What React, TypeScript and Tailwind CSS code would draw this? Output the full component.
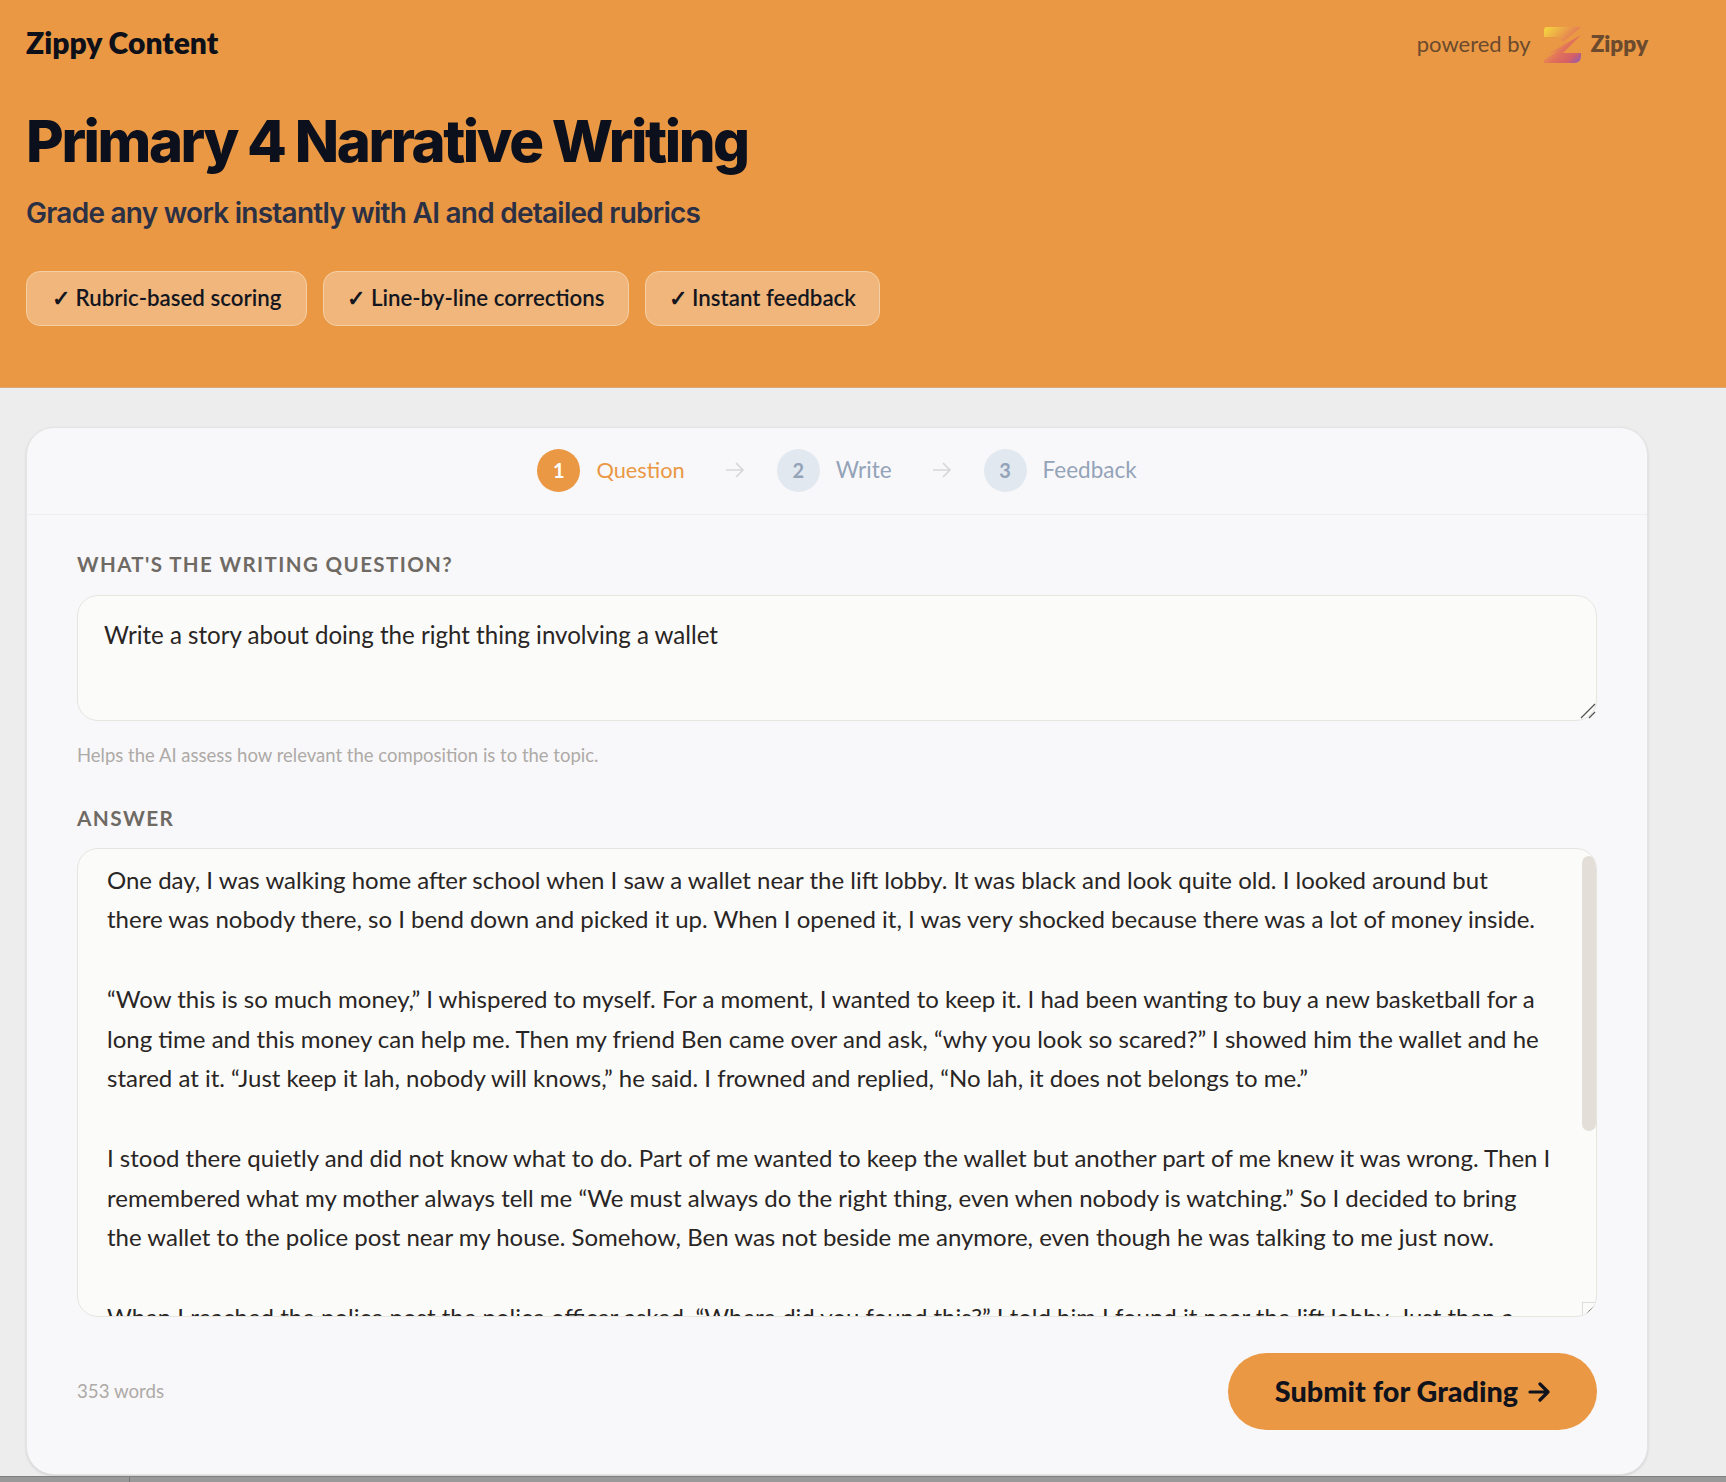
const lines = [
  "One day, I was walking home after school when I saw a wallet near the lift lobby. It was black and look quite old. I looked around but",
  "there was nobody there, so I bend down and picked it up. When I opened it, I was very shocked because there was a lot of money inside.",
  "\u00A0",
  "“Wow this is so much money,” I whispered to myself. For a moment, I wanted to keep it. I had been wanting to buy a new basketball for a",
  "long time and this money can help me. Then my friend Ben came over and ask, “why you look so scared?” I showed him the wallet and he",
  "stared at it. “Just keep it lah, nobody will knows,” he said. I frowned and replied, “No lah, it does not belongs to me.”",
  "\u00A0",
  "I stood there quietly and did not know what to do. Part of me wanted to keep the wallet but another part of me knew it was wrong. Then I",
  "remembered what my mother always tell me “We must always do the right thing, even when nobody is watching.” So I decided to bring",
  "the wallet to the police post near my house. Somehow, Ben was not beside me anymore, even though he was talking to me just now.",
  "\u00A0",
  "When I reached the police post the police officer asked, “Where did you found this?” I told him I found it near the lift lobby. Just then a",
];

function Logo() {
  return (
    <svg width="37" height="37" viewBox="0 0 37 37" className="shrink-0">
      <defs>
        <linearGradient id="zg" gradientUnits="userSpaceOnUse" x1="2" y1="2" x2="36" y2="36">
          <stop offset="0" stopColor="#f3d040" />
          <stop offset="0.3" stopColor="#eba04a" />
          <stop offset="0.55" stopColor="#e2735a" />
          <stop offset="0.8" stopColor="#d45f68" />
          <stop offset="1" stopColor="#8a5cb8" />
        </linearGradient>
      </defs>
      <path d="M3 0H37L19 15 14 10H0V3Q0 0 3 0Z" fill="url(#zg)" />
      <path d="M37 8 19 26H37V29Q37 36 30 36H0V33L13 24 0 29Z" fill="url(#zg)" />
    </svg>
  );
}

function Step({ n, label, active }: { n: number; label: string; active?: boolean }) {
  return (
    <div className="flex items-center gap-[16px]">
      <div className={active ? "w-[43px] h-[43px] rounded-full bg-[#ea9844] text-white flex items-center justify-center text-[20px] font-bold" : "w-[43px] h-[43px] rounded-full bg-[#e2e8f0] text-[#94a3b8] flex items-center justify-center text-[20px] font-bold"}>
        {n}
      </div>
      <span className={active ? "text-[21.8px] text-[#ea9844]" : "text-[22.5px] text-[#94a3b8]"}>{label}</span>
    </div>
  );
}

function Arrow() {
  return (
    <svg width="20" height="18" viewBox="0 0 20 18" fill="none" stroke="#d6d6d6" strokeWidth="1.6" className="ml-[40px] mr-[32px]">
      <path d="M1 9h17M11 2l7 7-7 7" />
    </svg>
  );
}

function Pill({ children, wide }: { children: string; wide?: boolean }) {
  return (
    <div className={wide ? "h-[55px] flex items-center px-[25px] pb-[2px] rounded-[14px] bg-[#f0b67b] border border-[#f5cfa4] text-[22.3px] font-semibold text-[#14161f] whitespace-nowrap" : "h-[55px] flex items-center px-[23px] pb-[2px] rounded-[14px] bg-[#f0b67b] border border-[#f5cfa4] text-[22.3px] font-semibold text-[#14161f] whitespace-nowrap"}>
      {children}
    </div>
  );
}

export default function App() {
  return (
    <div className="h-[1482px] overflow-hidden bg-[#ededed] relative font-['Lato',sans-serif]">
      <header className="h-[388px] bg-[#ea9844] border-b border-[#d9a878] pl-[26px] pr-[78px] pt-[22px]">
        <div className="flex items-center justify-between h-[40px]">
          <div className="text-[30px] font-extrabold text-[#0d1019] leading-none">Zippy Content</div>
          <div className="flex items-center mt-[3px]">
            <span className="text-[22px] text-[#6b4a2d]">powered by</span>
            <span className="ml-[13px] mt-[4px]"><Logo /></span>
            <span className="ml-[10px] mt-[1px] text-[22.5px] font-extrabold text-[#6b4a2d]">Zippy</span>
          </div>
        </div>
        <h1 className="pt-[41px] text-[58px] leading-[76px] font-extrabold tracking-[-2.43px] text-[#0c101c] font-['Inter',sans-serif]">Primary 4 Narrative Writing</h1>
        <p className="mt-[14px] text-[28px] leading-[40px] font-semibold tracking-[-0.75px] text-[#2c3045] font-['Inter',sans-serif]">Grade any work instantly with AI and detailed rubrics</p>
        <div className="mt-[38px] flex gap-[16px]">
          <Pill wide>✓ Rubric-based scoring</Pill>
          <Pill>✓ Line-by-line corrections</Pill>
          <Pill>✓ Instant feedback</Pill>
        </div>
      </header>

      <main className="pl-[26px] pr-[78px] pt-[39px]">
        <section className="h-[1048px] rounded-[28px] bg-[#f8f8fb] border border-[#e4e4e4] shadow-sm">
          <div className="h-[87px] border-b border-[#efefef] flex items-center justify-center pb-[2px]">
            <Step n={1} label="Question" active />
            <Arrow />
            <Step n={2} label="Write" />
            <Arrow />
            <Step n={3} label="Feedback" />
          </div>
          <div className="px-[50px] pt-[35px]">
            <div className="text-[20.5px] leading-[28px] font-bold tracking-[1.4px] text-[#6f6a64]">WHAT'S THE WRITING QUESTION?</div>
            <div className="relative mt-[17px] h-[126px] rounded-[21px] border border-[#e7e5e0] bg-[#fbfbf9] px-[26px] pt-[22px] text-[24.1px] leading-[34px] text-[#292524]">
              Write a story about doing the right thing involving a wallet
              <svg width="16" height="16" viewBox="0 0 16 16" className="absolute right-0 bottom-[1px]" stroke="#555" strokeWidth="1.3">
                <path d="M1 15 15 1M9 15l6-6" />
              </svg>
            </div>
            <div className="mt-[21px] text-[18.5px] leading-[26px] text-[#aeaaa6]">Helps the AI assess how relevant the composition is to the topic.</div>
            <div className="mt-[36px] text-[20.8px] leading-[28px] font-bold tracking-[1.4px] text-[#6f6a64]">ANSWER</div>
            <div className="relative mt-[16px] h-[469px] rounded-[21px] border border-[#e7e5e0] bg-[#fbfbf9] overflow-hidden pl-[29px] pt-[10.5px] text-[24px] leading-[39.75px] text-[#292524]">
              {lines.map((l, i) => (
                <div key={i} className="whitespace-nowrap">{l}</div>
              ))}
              <div className="absolute right-0 top-[7px] w-[14px] h-[275px] rounded-full bg-[#e3dfd8]" />
              <div className="absolute right-0 bottom-0 w-[14px] h-[14px] bg-[#fbfbf9] border-l border-t border-[#dcdcdc]" />
              <svg width="10" height="10" viewBox="0 0 10 10" className="absolute right-[1px] bottom-[1px]" stroke="#666" strokeWidth="1">
                <path d="M1 9 9 1M5 9l4-4" />
              </svg>
            </div>
            <div className="mt-[36px] flex items-center justify-between">
              <span className="text-[18.7px] text-[#aeaaa6]">353 words</span>
              <button className="h-[77px] w-[369px] rounded-full bg-[#ea9844] text-[28.8px] font-black text-[#10121c] flex items-center justify-center gap-[10px]">
                Submit for Grading
                <svg width="22" height="20" viewBox="0 0 22 20" fill="none" stroke="#10121c" strokeWidth="3.2" strokeLinecap="round" strokeLinejoin="round">
                  <path d="M2 10h18M12 2l8 8-8 8" />
                </svg>
              </button>
            </div>
          </div>
        </section>
      </main>
      <div className="absolute left-0 right-0 bottom-0 h-[6px] bg-[#999999] border-t border-[#7f7f7f]">
        <div className="absolute left-[129px] top-0 bottom-0 w-[1px] bg-[#777777]" />
      </div>
    </div>
  );
}
